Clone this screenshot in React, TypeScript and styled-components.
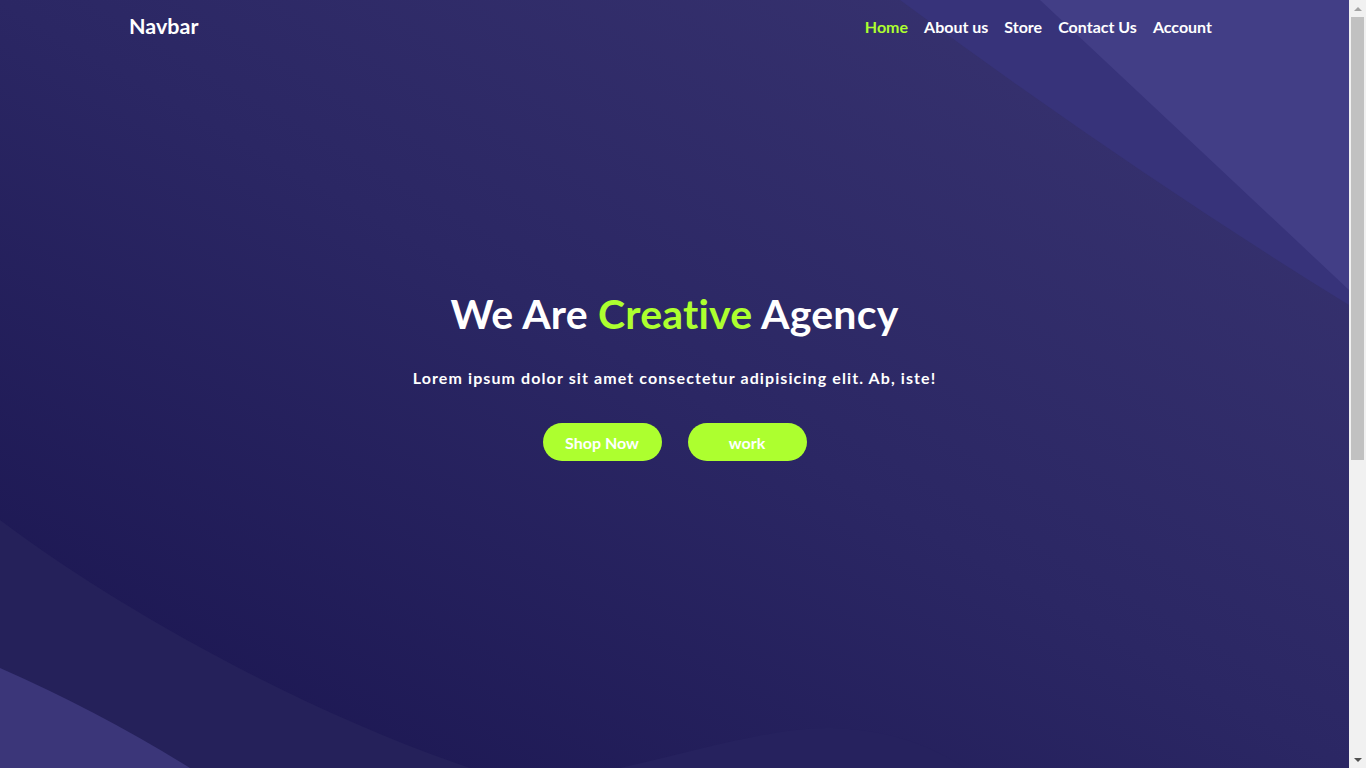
import styled, { createGlobalStyle } from "styled-components";

const GlobalStyle = createGlobalStyle`
  * {
    box-sizing: border-box;
    margin: 0;
    padding: 0;
  }
  body {
    font-family: Lato, "Open Sans", sans-serif;
    background: #1e1a56;
    padding-right: 17px;
    overflow: hidden;
  }
`;

const Hero = styled.header`
  position: relative;
  height: 100vh;
  overflow: hidden;
  display: flex;
  flex-direction: column;
  background: linear-gradient(to top right, #19144f 0%, #2b2764 50%, #3a3572 100%);
`;

const Backdrop = styled.svg`
  position: absolute;
  inset: 0;
  width: 100%;
  height: 100%;
`;

const Nav = styled.nav`
  position: relative;
  display: flex;
  justify-content: space-between;
  align-items: center;
  height: 52px;
  padding: 0 137px 0 129px;
`;

const Brand = styled.a`
  color: #fff;
  font-size: 21.5px;
  font-weight: 700;
  text-decoration: none;
`;

const Links = styled.ul`
  display: flex;
  gap: 16px;
  list-style: none;
`;

const Link = styled.a<{ $active?: boolean }>`
  color: ${(p) => (p.$active ? "#adff2f" : "#fff")};
  font-size: 16px;
  font-weight: 700;
  text-decoration: none;
`;

const Content = styled.div`
  position: relative;
  flex: 1;
  display: flex;
  flex-direction: column;
  align-items: center;
  justify-content: center;
  padding-bottom: 70px;
  text-align: center;
  color: #fff;
`;

const Title = styled.h1`
  font-size: 41px;
  font-weight: 700;
  letter-spacing: 0.2px;

  span {
    color: #adff2f;
  }
`;

const Lead = styled.p`
  margin-top: 30px;
  font-size: 16px;
  font-weight: 700;
  letter-spacing: 1.1px;
`;

const Buttons = styled.div`
  display: flex;
  gap: 26px;
  margin-top: 36px;
`;

const Button = styled.button`
  width: 119px;
  height: 38px;
  border: 0;
  border-radius: 19px;
  background: #adff2f;
  color: #fff;
  font-family: inherit;
  font-size: 16px;
  font-weight: 700;
  cursor: pointer;
`;

/* the browser's classic scrollbar, as seen in the screenshot */
const Scrollbar = styled.div`
  position: fixed;
  top: 0;
  right: 0;
  width: 17px;
  height: 100vh;
  display: flex;
  flex-direction: column;
  background: #f1f1f1;
`;

const Arrow = styled.div<{ $down?: boolean }>`
  height: 17px;
  display: flex;
  align-items: center;
  justify-content: center;

  &::before {
    content: "";
    border-left: 4px solid transparent;
    border-right: 4px solid transparent;
    ${(p) =>
      p.$down
        ? "border-top: 4px solid #505050;"
        : "border-bottom: 4px solid #a3a3a3;"}
  }
`;

const Track = styled.div`
  flex: 1;
  padding: 0 2px;
`;

const Thumb = styled.div`
  height: 443px;
  background: #c1c1c1;
`;

export default function App() {
  return (
    <>
      <GlobalStyle />
      <Hero>
        <Backdrop viewBox="0 0 1349 768" preserveAspectRatio="none">
          <path d="M900,0 Q1130,170 1349,305 L1349,0 Z" fill="#37337a" />
          <path d="M1040,0 Q1200,150 1349,290 L1349,0 Z" fill="#423e86" />
          <path d="M0,520 C120,610 300,710 470,768 L0,768 Z" fill="#25215a" />
          <path d="M0,668 Q100,712 190,768 L0,768 Z" fill="#3b3679" />
          <path d="M620,768 C700,750 780,726 832,728 C890,730 930,745 965,768 Z" fill="#26225e" />
        </Backdrop>
        <Nav>
          <Brand href="#">Navbar</Brand>
          <Links>
            <li><Link href="#" $active>Home</Link></li>
            <li><Link href="#">About us</Link></li>
            <li><Link href="#">Store</Link></li>
            <li><Link href="#">Contact Us</Link></li>
            <li><Link href="#">Account</Link></li>
          </Links>
        </Nav>
        <Content>
          <Title>
            We Are <span>Creative</span> Agency
          </Title>
          <Lead>Lorem ipsum dolor sit amet consectetur adipisicing elit. Ab, iste!</Lead>
          <Buttons>
            <Button>Shop Now</Button>
            <Button>work</Button>
          </Buttons>
        </Content>
      </Hero>
      <Scrollbar>
        <Arrow />
        <Track>
          <Thumb />
        </Track>
        <Arrow $down />
      </Scrollbar>
    </>
  );
}
